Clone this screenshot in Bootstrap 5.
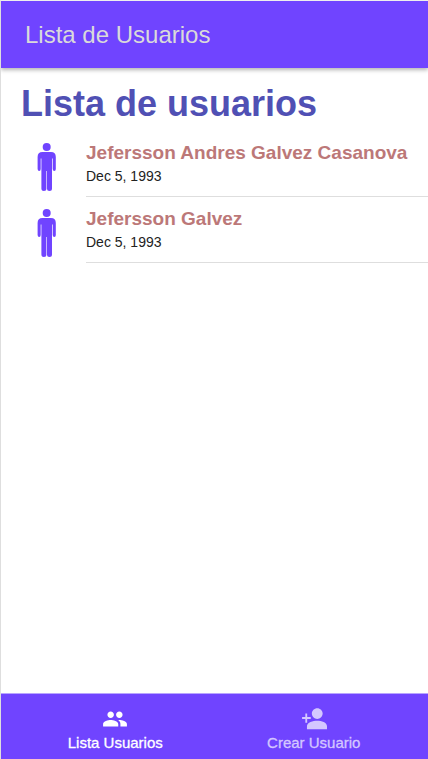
<!DOCTYPE html>
<html lang="es">
<head>
<meta charset="utf-8">
<meta name="viewport" content="width=device-width, initial-scale=1">
<title>Lista de Usuarios</title>
<link href="https://cdn.jsdelivr.net/npm/bootstrap@5.3.0/dist/css/bootstrap.min.css" rel="stylesheet">
<style>
:root { --app-violet: #7044ff; }
body { font-family: "Liberation Sans", Arial, sans-serif; background: #fff; border-left: 1px solid #dedede; border-top: 1px solid #eee; }
.app-header { background: var(--app-violet); min-height: 67px; padding: 0 24px; box-shadow: 0 2px 4px rgba(0,0,0,.3); }
.app-title { color: #dadada; font-size: 24px; line-height: 32px; }
.page-title { color: #5050b4; font-size: 36px; line-height: 44px; font-weight: 700; padding: 14px 20px 0; }
.user-list { padding-top: 5px; }
.user-avatar { width: 85px; padding: 12px 0 0 35px; color: var(--app-violet); }
.user-info { border-bottom: 1px solid #dedede; padding: 10px 0 9px; }
.user-name { color: #bc7878; font-size: 19px; line-height: 24px; font-weight: 700; }
.user-date { color: #222; font-size: 14px; line-height: 22px; }
.tab-bar { background: var(--app-violet); border-top: 1px solid #b8a4ff; padding: 12px 15px 7px; }
.tab-link { color: #d4c7ff; font-size: 15px; line-height: 18px; gap: 2px; -webkit-text-stroke: .3px currentColor; }
.tab-link.active { color: #fff; }
</style>
</head>
<body class="d-flex flex-column min-vh-100">
<header class="app-header d-flex align-items-center">
  <div class="app-title">Lista de Usuarios</div>
</header>
<main class="flex-grow-1">
  <h1 class="page-title mb-0">Lista de usuarios</h1>
  <ul class="user-list list-unstyled mb-0">
    <li class="d-flex">
      <div class="user-avatar flex-shrink-0">
        <svg class="d-block" width="22" height="48" viewBox="0 0 22 48" fill="currentColor" aria-hidden="true"><circle cx="10.700" cy="4" r="4"/><path d="M6.500 9H15Q19.800 9 19.800 14V26Q19.800 28 18.300 28T16.700 26V15.500H16V45.500Q16 48 13.500 48T11 45.500V28H10.400V45.500Q10.400 48 7.900 48T5.400 45.500V15.500H4.700V26Q4.700 28 3.200 28T1.600 26V14Q1.600 9 6.500 9Z"/></svg>
      </div>
      <div class="user-info flex-grow-1">
        <h2 class="user-name mb-0">Jefersson Andres Galvez Casanova</h2>
        <p class="user-date mb-0">Dec 5, 1993</p>
      </div>
    </li>
    <li class="d-flex">
      <div class="user-avatar flex-shrink-0">
        <svg class="d-block" width="22" height="48" viewBox="0 0 22 48" fill="currentColor" aria-hidden="true"><circle cx="10.700" cy="4" r="4"/><path d="M6.500 9H15Q19.800 9 19.800 14V26Q19.800 28 18.300 28T16.700 26V15.500H16V45.500Q16 48 13.500 48T11 45.500V28H10.400V45.500Q10.400 48 7.900 48T5.400 45.500V15.500H4.700V26Q4.700 28 3.200 28T1.600 26V14Q1.600 9 6.500 9Z"/></svg>
      </div>
      <div class="user-info flex-grow-1">
        <h2 class="user-name mb-0">Jefersson Galvez</h2>
        <p class="user-date mb-0">Dec 5, 1993</p>
      </div>
    </li>
  </ul>
</main>
<nav class="tab-bar d-flex" aria-label="Principal">
  <a class="tab-link active d-flex flex-column align-items-center text-decoration-none flex-fill w-50" href="#lista" aria-current="page">
    <svg width="26" height="26" viewBox="0 0 24 24" fill="currentColor" stroke="none" aria-hidden="true"><path d="M16 11c1.660 0 3-1.340 3-3s-1.340-3-3-3-3 1.340-3 3 1.340 3 3 3zm-8 0c1.660 0 3-1.340 3-3S9.660 5 8 5 5 6.340 5 8s1.340 3 3 3zm0 2c-2.330 0-7 1.170-7 3.500V19h14v-2.500c0-2.330-4.670-3.500-7-3.500zm8 0c-.29 0-.62.02-.97.05 1.160.84 1.970 1.970 1.970 3.450V19h6v-2.500c0-2.330-4.670-3.500-7-3.500z"/></svg>
    <span>Lista Usuarios</span>
  </a>
  <a class="tab-link d-flex flex-column align-items-center text-decoration-none flex-fill w-50" href="#crear">
    <svg width="26" height="26" viewBox="0 0 24 24" fill="currentColor" stroke="none" aria-hidden="true"><path d="M15 12c2.760 0 5-2.240 5-5s-2.240-5-5-5-5 2.240-5 5 2.240 5 5 5zM5.700 10.200V7H4v3.200H1v1.700h3v3.600h1.700v-3.600H9v-1.700zM15 13.700c-3.900 0-9.500 1.670-9.500 5V21.500h18.500v-2.800c0-3.330-5.100-5-9-5z"/></svg>
    <span>Crear Usuario</span>
  </a>
</nav>
<script src="https://cdn.jsdelivr.net/npm/bootstrap@5.3.0/dist/js/bootstrap.bundle.min.js"></script>
</body>
</html>
